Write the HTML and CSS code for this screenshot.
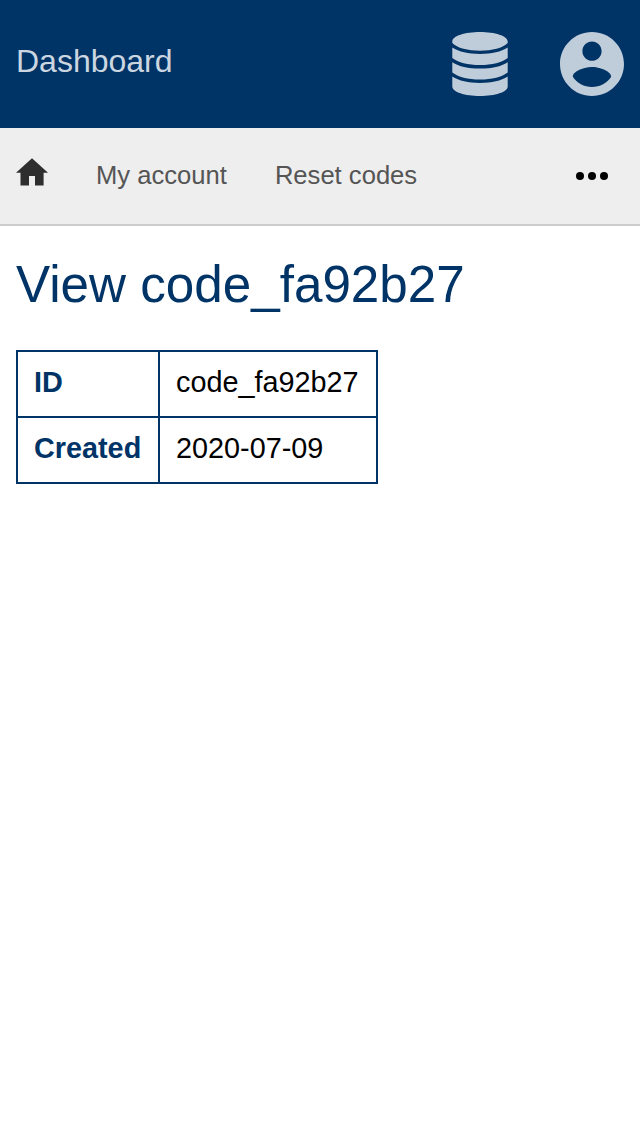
FILE: index.html
```html
<!DOCTYPE html>
<html lang="en">
<head>
<meta charset="utf-8">
<title>View code_fa92b27</title>
<link rel="stylesheet" href="styles.css">
</head>
<body>
<header class="header">
  <a class="brand">Dashboard</a>
  <div class="header-icons">
    <svg class="icon-db" viewBox="0 0 56 64"><path d="M.3 9.500C.3 4 13 0 28 0S55.700 4 55.700 9.500V11C51 16 40 18.700 28 18.700S5 16 .3 11ZM.3 15.600C7 20 16 22 28 22s21-2 27.700-6.400V26C50 30.500 40 33 28 33S6 30.500.3 26ZM.3 30.200C7 34.600 16 36.500 28 36.500s21-1.900 27.700-6.300V40.400C50 45 40 47.400 28 47.400S6 45 .3 40.400ZM.3 44.600C7 49 16 51 28 51s21-2 27.700-6.400V54.500C55.700 60 43 64 28 64S.3 60 .3 54.500Z"/></svg>
    <svg class="icon-user" viewBox="2 2 20 20"><path d="M12 2C6.480 2 2 6.480 2 12s4.480 10 10 10 10-4.480 10-10S17.520 2 12 2zm0 3c1.660 0 3 1.340 3 3s-1.340 3-3 3-3-1.340-3-3 1.340-3 3-3zm0 14.200c-2.500 0-4.710-1.280-6-3.220.03-1.990 4-3.080 6-3.080 1.990 0 5.970 1.090 6 3.080-1.290 1.940-3.500 3.220-6 3.220z"/></svg>
  </div>
</header>
<nav class="nav">
  <svg class="icon-home" viewBox="0 0 32 28"><path d="M16 .3 32 14.700H27.600V27.600H19V18H13V27.600H4.500V14.700H0Z"/></svg>
  <a class="nav-link">My account</a>
  <a class="nav-link">Reset codes</a>
  <svg class="icon-more" viewBox="0 0 32 8"><circle cx="4" cy="4" r="4"/><circle cx="16" cy="4" r="4"/><circle cx="28" cy="4" r="4"/></svg>
</nav>
<main class="main">
  <h1 class="title">View code_fa92b27</h1>
  <table class="details">
    <tr><th>ID</th><td>code_fa92b27</td></tr>
    <tr><th>Created</th><td>2020-07-09</td></tr>
  </table>
</main>
</body>
</html>
```

FILE: styles.css
```css
body {
  margin: 0;
  background: #fff;
  color: #000;
  font-family: "Liberation Sans", Arial, sans-serif;
}
.header {
  box-sizing: border-box;
  height: 128px;
  padding: 0 16px;
  display: flex;
  align-items: center;
  justify-content: space-between;
  background: #003366;
}
.brand {
  padding-bottom: 6px;
  font-size: 32px;
  line-height: 36px;
  color: #ccd6e0;
}
.header-icons {
  display: flex;
  gap: 52px;
  fill: #bfccd9;
}
.icon-db { width: 56px; height: 64px; }
.icon-user { width: 64px; height: 64px; }
.nav {
  box-sizing: border-box;
  height: 98px;
  padding: 0 32px 0 16px;
  display: flex;
  align-items: center;
  gap: 48px;
  background: #eee;
  border-bottom: 2px solid #ccc;
}
.icon-home {
  width: 32px;
  height: 28px;
  margin-bottom: 8px;
  fill: #2e2e2e;
}
.nav-link {
  padding-bottom: 2px;
  font-size: 25.600px;
  line-height: 30px;
  color: #555;
}
.icon-more {
  width: 32px;
  height: 8px;
  margin-left: auto;
}
.main { padding: 30px 16px; }
.title {
  margin: 0 0 36px;
  font-size: 51.200px;
  line-height: 58px;
  font-weight: 400;
  color: #003366;
}
.details {
  width: 362px;
  table-layout: fixed;
  border-collapse: collapse;
  font-size: 28.800px;
  line-height: 32px;
}
.details th,
.details td {
  padding: 14px 16px 18px;
  border: 2px solid #003366;
  text-align: left;
}
.details th {
  box-sizing: border-box;
  width: 142px;
  color: #003366;
}
```
